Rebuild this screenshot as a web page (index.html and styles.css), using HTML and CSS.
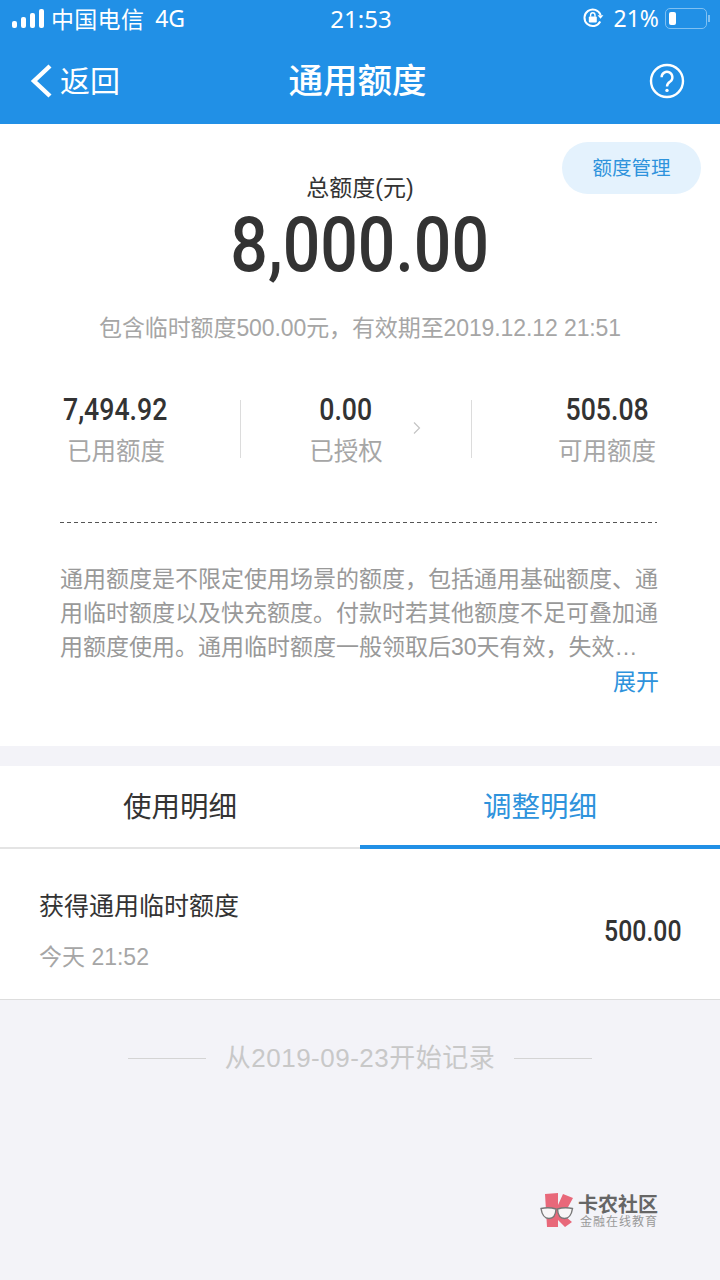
FILE: index.html
```html
<!DOCTYPE html>
<html lang="zh-CN">
<head>
    <meta charset="UTF-8" />
    <meta name="viewport" content="width=device-width, initial-scale=1" />
    <title>通用额度</title>
    <link rel="stylesheet" href="styles.css">
</head>
<body>

    <div class="top">
        <div class="status">
            <div class="status-left">
                <div class="signal"><i></i><i></i><i></i><i></i></div>
                <span class="carrier">中国电信</span>
                <span class="net">4G</span>
            </div>
            <div class="clock">21:53</div>
            <div class="status-right">
                <svg class="lock" width="22" height="22" viewBox="0 0 22 22" fill="none">
                    <path d="M18.2 14.5A8.3 8.3 0 1 1 18.6 8" stroke="#fff" stroke-width="2"/>
                    <path d="M15.6 8.2h5.8l-2.9 3.6z" fill="#fff"/>
                    <rect x="6.8" y="9.6" width="8" height="6" rx="1" fill="#fff"/>
                    <path d="M8.6 9.8V8a2.2 2.2 0 0 1 4.4 0v1.8" stroke="#fff" stroke-width="1.4"/>
                </svg>
                <span class="percent">21%</span>
                <div class="battery"><div class="battery-fill"></div></div>
                <div class="battery-tip"></div>
            </div>
        </div>
        <div class="nav">
            <div class="back">
                <svg width="24" height="34" viewBox="0 0 24 34" fill="none">
                    <path d="M21 2 5 17l16 15" stroke="#fff" stroke-width="4.4"/>
                </svg>
                <span>返回</span>
            </div>
            <h1>通用额度</h1>
            <svg class="help" width="36" height="36" viewBox="0 0 36 36" fill="none">
                <circle cx="18" cy="18" r="16" stroke="#fff" stroke-width="2.4"/>
                <path d="M12.6 14.2a5.4 5.4 0 1 1 8.6 4.4c-2 1.4-3.2 2.4-3.2 4.8" stroke="#fff" stroke-width="2.4"/>
                <circle cx="18" cy="27.4" r="1.7" fill="#fff"/>
            </svg>
        </div>
    </div>

    <div class="summary">
        <div class="manage">额度管理</div>
        <div class="total-label">总额度(元)</div>
        <div class="total"><span>8,000.00</span></div>
        <div class="temp-note">包含临时额度500.00元，有效期至2019.12.12 21:51</div>

        <div class="stats">
            <div class="stat stat-left">
                <div class="stat-num"><span>7,494.92</span></div>
                <div class="stat-label">已用额度</div>
            </div>
            <div class="stat stat-mid">
                <div class="stat-num"><span>0.00</span></div>
                <div class="stat-label">已授权</div>
                <svg class="chevron" width="8" height="14" viewBox="0 0 8 14" fill="none">
                    <path d="M1 1.5 6.5 7 1 12.5" stroke="#c4c4c4" stroke-width="1.2"/>
                </svg>
            </div>
            <div class="stat stat-right">
                <div class="stat-num"><span>505.08</span></div>
                <div class="stat-label">可用额度</div>
            </div>
        </div>

        <div class="dash"></div>

        <p class="desc">通用额度是不限定使用场景的额度，包括通用基础额度、通用临时额度以及快充额度。付款时若其他额度不足可叠加通用额度使用。通用临时额度一般领取后30天有效，失效…</p>
        <div class="more">展开</div>
    </div>

    <div class="tabs">
        <div class="tab">使用明细</div>
        <div class="tab active">调整明细</div>
    </div>

    <div class="record">
        <div>
            <div class="record-title">获得通用临时额度</div>
            <div class="record-time">今天 21:52</div>
        </div>
        <div class="record-num">500.00</div>
    </div>

    <div class="since">
        <span class="since-line"></span>
        <span>从2019-09-23开始记录</span>
        <span class="since-line"></span>
    </div>

    <div class="mark">
        <svg width="36" height="36" viewBox="0 0 36 36" fill="none">
            <path d="M5 1 18 0v12l5-11 10 4-6 11-7 3 12 10-7 5-7-7v7L7 34z" fill="#e8687a"/>
            <path d="M1 15.500c5-1 10-1 15 .5-.3 6-2.500 9.500-7 9.500-4.500 0-7-3.500-8-10z" fill="#f8f6f7" stroke="#777" stroke-width="1.4"/>
            <path d="M32.500 15.500c-5-1-10-1-15 .5.300 6 2.500 9.500 7 9.500 4.500 0 7-3.500 8-10z" fill="#f8f6f7" stroke="#777" stroke-width="1.4"/>
        </svg>
        <div class="mark-text">
            <div class="mark-name">卡农社区</div>
            <div class="mark-sub">金融在线教育</div>
        </div>
    </div>

</body>
</html>
```

FILE: styles.css
```css
body {
    margin: 0;
    width: 720px;
    min-height: 1280px;
    background-color: #f3f3f8;
    font-family: "Liberation Sans", "Noto Sans CJK SC", sans-serif;
    color: #333;
    overflow: hidden;
}
.top {
    background-color: #2190e6;
    color: #fff;
    height: 124px;
}
.status {
    height: 36px;
    padding: 0 10px 0 12px;
    display: grid;
    grid-template-columns: 1fr auto 1fr;
    align-items: center;
    font-size: 23px;
    font-family: "Noto Sans", "Noto Sans CJK SC", sans-serif;
}
.status-left {
    display: flex;
    align-items: center;
}
.signal {
    display: flex;
    align-items: flex-end;
    gap: 4px;
    margin-right: 7px;
}
.signal i {
    display: block;
    width: 5px;
    border-radius: 2px;
    background-color: #fff;
}
.signal i:nth-child(1) { height: 7px; }
.signal i:nth-child(2) { height: 11px; }
.signal i:nth-child(3) { height: 15px; }
.signal i:nth-child(4) { height: 19px; }
.carrier {
    letter-spacing: 0.3px;
}
.net {
    margin-left: 11px;
}
.clock {
    font-size: 24px;
}
.status-right {
    display: flex;
    align-items: center;
    justify-content: flex-end;
}
.lock {
    margin-right: 10px;
}
.battery {
    width: 42px;
    height: 21px;
    margin-left: 6px;
    border: 1px solid #7fc0f2;
    border-radius: 5px;
    padding: 3px;
    box-sizing: border-box;
    display: flex;
}
.battery-fill {
    width: 7px;
    background-color: #fff;
    border-radius: 2px;
}
.battery-tip {
    width: 2px;
    height: 7px;
    margin-left: 1px;
    background-color: #7fc0f2;
}
.nav {
    height: 88px;
    box-sizing: border-box;
    padding: 2px 35px 0 29px;
    display: grid;
    grid-template-columns: 1fr auto 1fr;
    align-items: center;
}
.nav h1 {
    margin: 0;
    padding: 0 0 6px 1px;
    font-size: 34.5px;
    font-weight: 500;
}
.back {
    display: flex;
    align-items: center;
    font-size: 30px;
    gap: 7px;
}
.back span {
    padding-bottom: 4px;
}
.help {
    justify-self: end;
}
.summary {
    position: relative;
    background-color: #fff;
    height: 622px;
    padding-top: 50px;
    box-sizing: border-box;
    text-align: center;
}
.manage {
    position: absolute;
    top: 18px;
    right: 19px;
    width: 139px;
    height: 52px;
    line-height: 52px;
    border-radius: 26px;
    background-color: #e4f2fd;
    color: #2e93dc;
    font-size: 19.5px;
}
.total-label {
    font-size: 23px;
    line-height: 28px;
}
.total {
    margin-top: 1px;
    font-family: Roboto, sans-serif;
    font-weight: 500;
    font-size: 76px;
    line-height: 84px;
    color: #333;
}
.total span {
    display: inline-block;
    transform: scaleX(0.87);
}
.temp-note {
    margin-top: 26px;
    font-size: 23px;
    line-height: 30px;
    letter-spacing: -0.1px;
    color: #a6a6a6;
}
.stats {
    display: flex;
    margin: 49px 64px 0 63px;
    height: 76px;
}
.stat-left {
    flex: 0 0 177px;
    text-align: left;
}
.stat-right {
    flex: 1;
    text-align: right;
}
.stat-mid {
    position: relative;
    flex: 0 0 232px;
    box-sizing: border-box;
    border-left: 1px solid #dcdcdc;
    border-right: 1px solid #dcdcdc;
    height: 58px;
    margin-top: 8px;
}
.stat-mid .stat-num {
    margin-top: -8px;
    margin-left: -20px;
}
.stat-mid .stat-label {
    margin-left: -20px;
}
.chevron {
    position: absolute;
    top: 21px;
    right: 50px;
}
.stat-num {
    font-family: Roboto, sans-serif;
    font-weight: 500;
    font-size: 31px;
    line-height: 36px;
    color: #333;
}
.stat-num span {
    display: inline-block;
    transform: scaleX(0.86);
}
.stat-left .stat-num span {
    transform-origin: left center;
}
.stat-right .stat-num span {
    transform-origin: right center;
    margin-right: 7px;
}
.stat-label {
    margin-top: 8px;
    font-size: 24.5px;
    line-height: 32px;
    color: #a6a6a6;
}
.stat-left .stat-label {
    margin-left: 4px;
}
.dash {
    margin: 54px 63px 0 60px;
    height: 1px;
    background-image: repeating-linear-gradient(90deg, #555 0, #555 4px, transparent 4px, transparent 7px);
}
.desc {
    margin: 39px 60px 0;
    font-size: 23px;
    line-height: 34px;
    color: #999;
    text-align: left;
    height: 104px;
    overflow: hidden;
}
.more {
    text-align: right;
    margin: 1px 61px 0;
    font-size: 23px;
    line-height: 30px;
    color: #2e93dc;
}
.tabs {
    margin-top: 20px;
    background-color: #fff;
    height: 83px;
    display: flex;
}
.tab {
    flex: 1;
    box-sizing: border-box;
    text-align: center;
    font-size: 28.5px;
    line-height: 83px;
    border-bottom: 2px solid #e4e4e4;
}
.tab.active {
    color: #2e93dc;
    border-bottom: 4px solid #2190e6;
}
.record {
    background-color: #fff;
    height: 151px;
    box-sizing: border-box;
    padding: 14px 39px 0;
    border-bottom: 1px solid #ddd;
    display: flex;
    justify-content: space-between;
    align-items: center;
}
.record-title {
    font-size: 25px;
    line-height: 34px;
}
.record-time {
    margin-top: 18px;
    font-size: 23px;
    line-height: 32px;
    color: #a6a6a6;
}
.record-num {
    font-family: Roboto, sans-serif;
    font-weight: 500;
    font-size: 29px;
    transform: scaleX(0.855);
    transform-origin: right center;
}
.since {
    margin-top: 41px;
    display: flex;
    justify-content: center;
    align-items: center;
    gap: 19px;
    font-size: 26px;
    line-height: 34px;
    letter-spacing: 0.5px;
    color: #c8c8c8;
}
.since-line {
    width: 78px;
    border-top: 1px solid #d4d4d4;
}
.mark {
    position: absolute;
    top: 1193px;
    left: 540px;
    display: flex;
    gap: 2px;
    color: #666;
}
.mark-name {
    font-size: 20px;
    line-height: 24px;
    font-weight: 700;
}
.mark-sub {
    margin-top: -2px;
    margin-left: 2px;
    font-size: 12px;
    line-height: 14px;
    letter-spacing: 1px;
    color: #999;
}
```
